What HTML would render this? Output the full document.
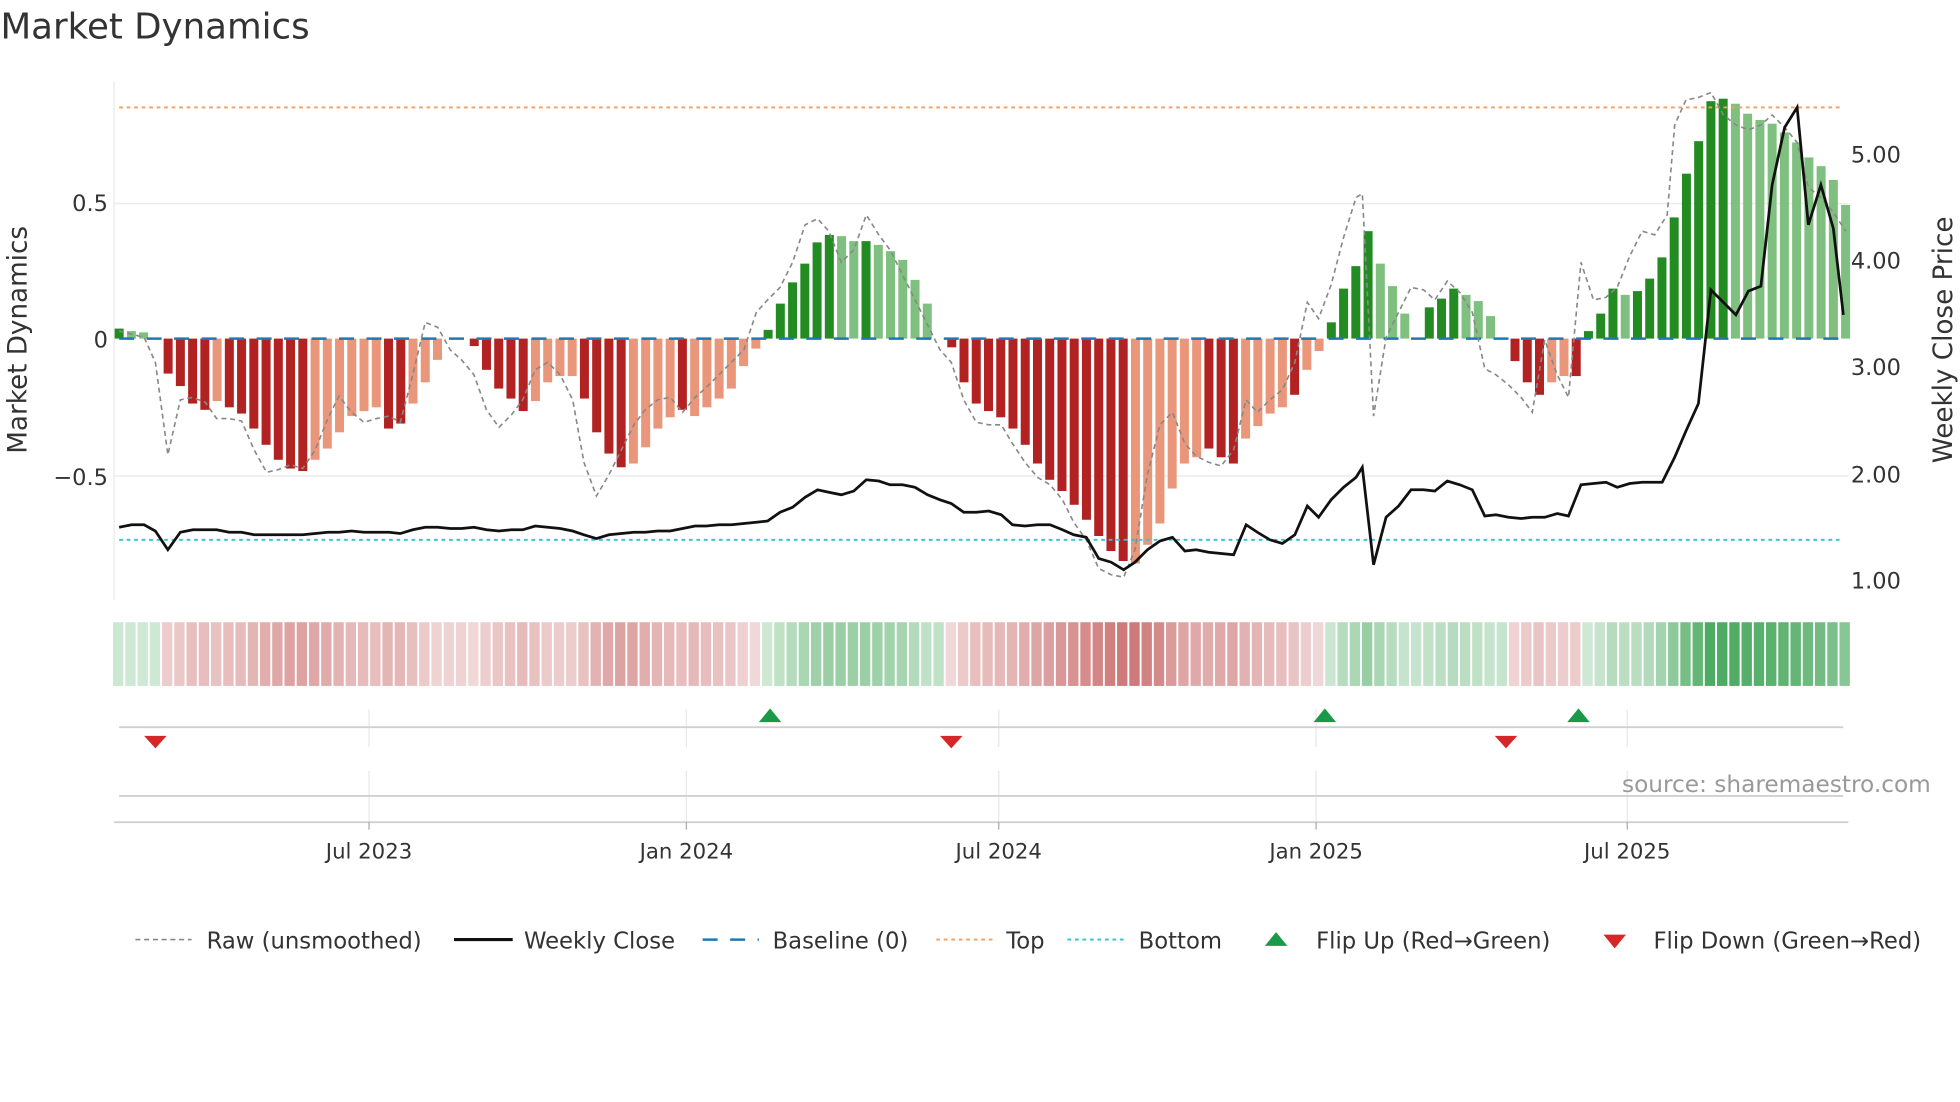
<!DOCTYPE html>
<html><head><meta charset="utf-8">
<style>
html,body{margin:0;padding:0;background:#fff;width:1960px;height:1102px;overflow:hidden}
svg{display:block}
text{font-family:"DejaVu Sans","Liberation Sans",sans-serif;fill:#333}
</style></head>
<body>
<svg id="s" width="1960" height="1102" viewBox="0 0 1568 882" xmlns="http://www.w3.org/2000/svg">
<text x="0" y="31" font-size="28.5">Market Dynamics</text>
<line x1="91" y1="65" x2="91" y2="480" stroke="#eaeaea" stroke-width="1"/>
<line x1="91" y1="163" x2="1479" y2="163" stroke="#ececec" stroke-width="1.2"/>
<line x1="91" y1="381" x2="1479" y2="381" stroke="#ececec" stroke-width="1.2"/>
<g id="bars"></g>
<g id="strip"></g>
<line x1="95" y1="86" x2="1475" y2="86" stroke="#f0a060" stroke-width="1.5" stroke-dasharray="3,3"/>
<line x1="95" y1="432" x2="1475" y2="432" stroke="#2ec4d6" stroke-width="1.5" stroke-dasharray="3,3"/>
<line x1="95" y1="271" x2="1475" y2="271" stroke="#1f77b4" stroke-width="2" stroke-dasharray="12,10"/>
<polyline id="raw" fill="none" stroke="#888" stroke-width="1.3" stroke-dasharray="4,3"/>
<polyline id="close" fill="none" stroke="#111" stroke-width="2.2"/>
<text x="86" y="169" font-size="18" text-anchor="end">0.5</text>
<text x="86" y="278" font-size="18" text-anchor="end">0</text>
<text x="86" y="388" font-size="18" text-anchor="end">−0.5</text>
<text x="1481" y="130" font-size="18">5.00</text>
<text x="1481" y="215" font-size="18">4.00</text>
<text x="1481" y="300" font-size="18">3.00</text>
<text x="1481" y="386" font-size="18">2.00</text>
<text x="1481" y="471" font-size="18">1.00</text>
<text transform="translate(21,272) rotate(-90)" font-size="21" text-anchor="middle">Market Dynamics</text>
<text transform="translate(1562,272) rotate(-90)" font-size="21" text-anchor="middle">Weekly Close Price</text>
<g stroke="#e8e8e8" stroke-width="1">
<line x1="295" y1="568" x2="295" y2="598"/><line x1="549" y1="568" x2="549" y2="598"/><line x1="799" y1="568" x2="799" y2="598"/><line x1="1053" y1="568" x2="1053" y2="598"/><line x1="1302" y1="568" x2="1302" y2="598"/>
<line x1="295" y1="617" x2="295" y2="658"/><line x1="549" y1="617" x2="549" y2="658"/><line x1="799" y1="617" x2="799" y2="658"/><line x1="1053" y1="617" x2="1053" y2="658"/><line x1="1302" y1="617" x2="1302" y2="658"/>
</g>
<line x1="95" y1="582" x2="1475" y2="582" stroke="#d0d0d0" stroke-width="1.5"/>
<line x1="95" y1="637" x2="1475" y2="637" stroke="#d0d0d0" stroke-width="1.5"/>
<line x1="91" y1="658" x2="1479" y2="658" stroke="#d0d0d0" stroke-width="1.5"/>
<g stroke="#aaa" stroke-width="1"><line x1="295" y1="658" x2="295" y2="664"/><line x1="549" y1="658" x2="549" y2="664"/><line x1="799" y1="658" x2="799" y2="664"/><line x1="1053" y1="658" x2="1053" y2="664"/><line x1="1302" y1="658" x2="1302" y2="664"/></g>
<g fill="#d62728"><path d="M115,589 h18 l-9,10 z"/><path d="M752,589 h18 l-9,10 z"/><path d="M1196,589 h18 l-9,10 z"/></g>
<g fill="#1a9a48"><path d="M607,578 h18 l-9,-11 z"/><path d="M1051,578 h18 l-9,-11 z"/><path d="M1254,578 h18 l-9,-11 z"/></g>
<text x="1545" y="634" font-size="18.6" text-anchor="end" style="fill:#999">source: sharemaestro.com</text>
<g font-size="17"><text x="295" y="687" text-anchor="middle">Jul 2023</text><text x="549" y="687" text-anchor="middle">Jan 2024</text><text x="799" y="687" text-anchor="middle">Jul 2024</text><text x="1053" y="687" text-anchor="middle">Jan 2025</text><text x="1302" y="687" text-anchor="middle">Jul 2025</text></g>
<g font-size="18.2">
<line x1="108" y1="752" x2="153" y2="752" stroke="#888" stroke-width="1.3" stroke-dasharray="4,3"/><text x="165" y="759">Raw (unsmoothed)</text>
<line x1="363" y1="752" x2="410" y2="752" stroke="#111" stroke-width="2.5"/><text x="419" y="759">Weekly Close</text>
<line x1="562" y1="752" x2="607" y2="752" stroke="#1f77b4" stroke-width="2" stroke-dasharray="12,10"/><text x="618" y="759">Baseline (0)</text>
<line x1="749" y1="752" x2="794" y2="752" stroke="#f0a060" stroke-width="1.5" stroke-dasharray="3,3"/><text x="805" y="759">Top</text>
<line x1="854" y1="752" x2="899" y2="752" stroke="#2ec4d6" stroke-width="1.5" stroke-dasharray="3,3"/><text x="911" y="759">Bottom</text>
<path d="M1012,757 h18 l-9,-11 z" fill="#1a9a48"/><text x="1053" y="759">Flip Up (Red→Green)</text>
<path d="M1283,748 h18 l-9,11 z" fill="#d62728"/><text x="1323" y="759">Flip Down (Green→Red)</text>
</g>
</svg>
<script>
var V=[[8,1],[6,0],[5,0],[0,0],[-28,1],[-38,1],[-52,1],[-57,1],[-50,0],[-55,1],[-60,1],[-72,1],[-85,1],[-97,1],[-104,1],[-106,1],[-97,0],[-88,0],[-75,0],[-62,0],[-58,0],[-55,0],[-72,1],[-68,1],[-52,0],[-35,0],[-17,0],[0,0],[0,0],[-6,1],[-25,1],[-40,1],[-48,1],[-58,1],[-50,0],[-35,0],[-30,0],[-30,0],[-48,1],[-75,1],[-92,1],[-103,1],[-100,0],[-87,0],[-72,0],[-63,0],[-57,1],[-62,0],[-55,0],[-48,0],[-40,0],[-22,0],[-8,0],[7,1],[28,1],[45,1],[60,1],[77,1],[83,1],[82,0],[78,0],[78,1],[75,0],[70,0],[63,0],[47,0],[28,0],[0,0],[-7,1],[-35,1],[-52,1],[-58,1],[-63,1],[-72,1],[-85,1],[-100,1],[-113,1],[-122,1],[-133,1],[-145,1],[-158,1],[-170,1],[-178,1],[-180,0],[-165,0],[-148,0],[-120,0],[-100,0],[-95,0],[-88,1],[-95,1],[-100,1],[-80,0],[-70,0],[-60,0],[-55,0],[-45,1],[-25,0],[-10,0],[13,1],[40,1],[58,1],[86,1],[60,0],[42,0],[20,0],[0,0],[25,1],[32,1],[40,1],[35,0],[30,0],[18,0],[0,0],[-18,1],[-35,1],[-45,1],[-35,0],[-30,0],[-30,1],[6,1],[20,1],[40,1],[35,0],[38,1],[48,1],[65,1],[97,1],[132,1],[158,1],[190,1],[192,1],[188,0],[180,0],[175,0],[172,0],[165,0],[157,0],[145,0],[138,0],[127,0],[107,0]];
var ns="http://www.w3.org/2000/svg",b=document.getElementById('bars'),st=document.getElementById('strip');
function r(g,x,y,w,h,f){var e=document.createElementNS(ns,'rect');e.setAttribute('x',x);e.setAttribute('y',y);e.setAttribute('width',w);e.setAttribute('height',h);e.setAttribute('fill',f);g.appendChild(e);}
var prev=8;
V.forEach(function(v,i){var x=95+i*9.8,h=v[0];
 var c=h>=0?(v[1]?'#228b22':'#7fbf7f'):(v[1]?'#b22222':'#e9967a');
 if(h>0)r(b,x-3.6,271-h,7.2,h,c);else if(h<0)r(b,x-3.6,271,7.2,-h,c);
 var hv=h===0?prev:h;prev=hv;var a=0.2+0.6*Math.min(1,Math.abs(hv)/190);
 var col=hv>=0?'rgba(34,150,60,'+a.toFixed(2)+')':'rgba(180,50,50,'+(a*0.85).toFixed(2)+')';
 r(st,x-4.9,498,8.3,51,col);
});
document.getElementById('close').setAttribute('points',"95,422 105,420 115,420 124,425 134,440 144,426 154,424 164,424 173,424 183,426 193,426 203,428 213,428 222,428 232,428 242,428 252,427 262,426 271,426 281,425 291,426 301,426 311,426 320,427 330,424 340,422 350,422 360,423 369,423 379,422 389,424 399,425 409,424 418,424 428,421 438,422 448,423 458,425 467,428 477,431 487,428 497,427 507,426 516,426 526,425 536,425 546,423 556,421 565,421 575,420 585,420 595,419 605,418 614,417 624,410 634,406 644,398 654,392 663,394 673,396 683,393 693,384 703,385 712,388 722,388 732,390 742,396 752,400 761,403 771,410 781,410 791,409 801,412 810,420 820,421 830,420 840,420 850,424 859,428 869,430 879,447 889,450 899,456 908,450 918,440 928,433 938,430 948,441 957,440 967,442 977,443 987,444 997,420 1006,426 1016,432 1026,435 1036,428 1046,405 1055,414 1065,400 1075,390 1085,382 1090,374 1099,452 1109,414 1119,405 1129,392 1139,392 1148,393 1158,385 1168,388 1178,392 1188,413 1197,412 1207,414 1217,415 1226,414 1236,414 1246,411 1255,413 1265,388 1275,387 1285,386 1294,390 1304,387 1314,386 1330,386 1340,366 1349,345 1359,323 1369,232 1379,242 1389,252 1399,233 1409,229 1418,148 1428,102 1438,86 1447,180 1457,148 1467,183 1475,252");
document.getElementById('raw').setAttribute('points',"95,265 115,270 124,290 134,364 144,320 154,318 164,322 173,335 183,335 193,337 203,360 213,378 222,376 232,372 242,375 252,360 262,335 271,317 281,330 291,338 301,335 311,333 320,338 330,300 340,258 350,262 360,280 369,288 379,300 389,328 399,342 409,332 418,320 428,296 438,290 448,300 458,320 467,370 477,397 487,380 497,360 507,340 516,328 526,320 536,318 546,330 556,318 565,310 575,300 585,290 595,280 605,250 614,240 624,230 634,210 644,180 654,175 663,185 673,210 683,200 693,172 703,188 712,200 722,220 732,240 742,260 752,280 761,290 771,320 781,338 791,340 801,340 810,355 820,370 830,382 840,388 850,400 859,418 869,432 879,455 889,460 899,462 908,440 918,380 928,340 938,330 948,355 957,365 967,370 977,373 987,360 997,320 1006,330 1016,320 1026,312 1036,290 1046,242 1055,255 1065,228 1075,190 1085,158 1090,155 1099,333 1109,270 1119,250 1129,230 1139,232 1148,240 1158,225 1168,234 1178,250 1188,295 1197,300 1207,308 1217,318 1226,330 1236,272 1246,300 1255,318 1265,210 1275,240 1285,238 1294,230 1304,205 1314,185 1324,188 1334,172 1340,100 1349,80 1359,78 1369,74 1379,92 1389,100 1399,104 1409,100 1418,92 1428,102 1438,114 1447,150 1457,158 1467,170 1477,185");
</script>
</body></html>
